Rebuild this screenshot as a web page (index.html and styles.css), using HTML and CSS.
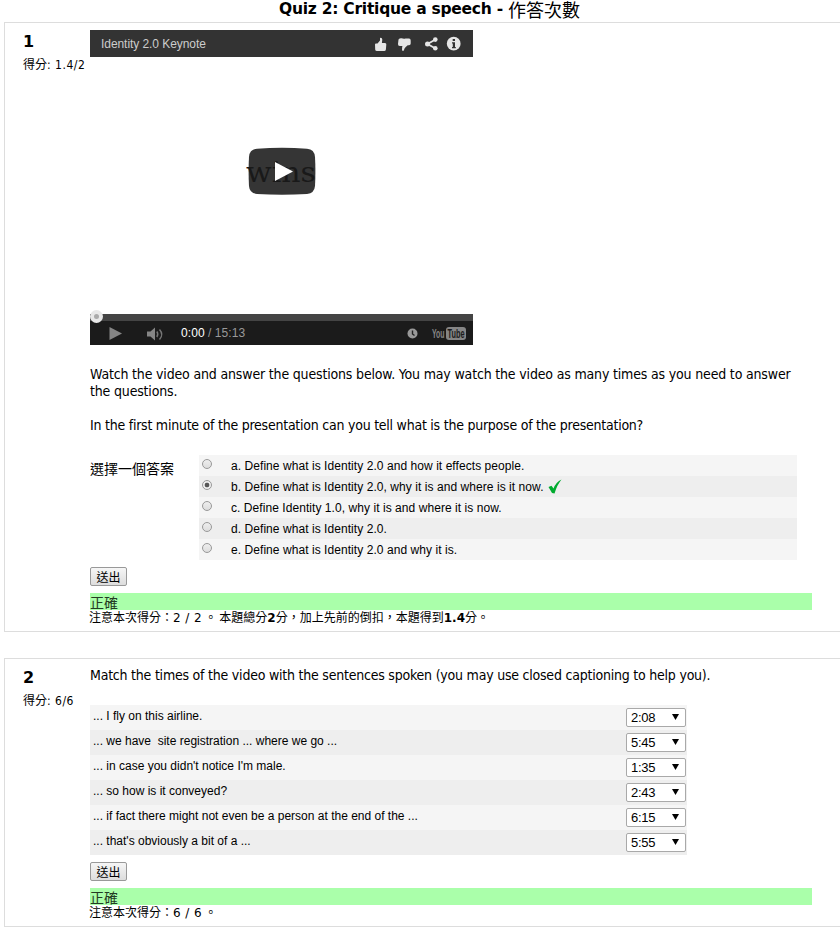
FILE: index.html
```html
<!DOCTYPE html>
<html lang="zh-Hant">
<head>
<meta charset="utf-8">
<title>Quiz 2: Critique a speech</title>
<link rel="stylesheet" href="styles.css">
</head>
<body>
<h1 class="title">Quiz 2: Critique a speech - <span class="cjk">作答次數</span></h1>

<section class="question first">
  <div class="info"><h2>1</h2><p class="grade"><span class="cjk">得分</span>: 1.4/2</p></div>
  <div class="content">
    <div class="player">
      <div class="player-top">
        <span class="player-title">Identity 2.0 Keynote</span>
        <svg class="actions" width="90" height="27" viewBox="0 0 90 27" fill="#e6e6e6">
          <path d="M2 14.500q0-1 1-1h1.500l2.500-3V8q2-.7 2.300 1.500l-.4 3.500H12q1.500.2 1.300 1.500l-.4 5q-.2 1.500-1.700 1.500H4q-1.700 0-1.800-1.500z"/>
          <path d="M25.500 9.500q1-1.500 3-1.300 2 .8 4 .3h3.500q1.700 0 1.700 2v3q0 1.500-1.700 1.700h-1.300q-2.800 2-3.300 3.500-.2 2.300-1.700 2.300-1-.8-.6-3.300l.3-1.700h-2.600q-2-.2-1.800-2z"/>
          <path d="M62.500 9.500 54.500 14l8 4.500" fill="none" stroke="#e6e6e6" stroke-width="1.800"/><circle cx="62.300" cy="9.600" r="2.300"/><circle cx="54.500" cy="14" r="2.500"/><circle cx="62.300" cy="18.300" r="2.300"/>
          <circle cx="80.700" cy="13.700" r="6.900"/>
          <path d="M79.700 9h2.300v2h-2.300zM79 12.200H82v4.800h.8v1.200H79V17h.8v-3.600H79z" fill="#333"/>
        </svg>
      </div>
      <div class="screen">
        <svg width="80" height="56" viewBox="0 0 80 56">
          <path d="M14 3.700Q39 2 64 3.700 71.500 4.300 72 12 72.800 26 72 41 71.500 48 64 49 39 50.500 14 49 6.500 48.200 6 41 5.200 26 6 12 6.500 4.300 14 3.700z" fill="#353535"/>
          <text class="caption" x="3" y="37" textLength="70" lengthAdjust="spacingAndGlyphs">wins</text>
          <path d="M32 17v19l18-9.500z" fill="#fff"/>
        </svg>
      </div>
      <div class="progress"><span class="knob"></span></div>
      <div class="controls">
        <svg class="buttons" width="80" height="24" viewBox="0 0 80 24" fill="#858585">
          <path d="M19.500 6v13L32 12.500z"/>
          <path d="M57 10.500h3.500l4.500-4v13l-4.500-4H57z"/>
          <path d="M66.800 10.500q2 2.700 0 5.500M69.500 8.500q4.500 5 0 10" fill="none" stroke="#777" stroke-width="1.400"/>
        </svg>
        <span class="time"><b>0:00</b> / 15:13</span>
        <svg class="brand" width="66" height="24" viewBox="0 0 66 24">
          <circle cx="12.500" cy="12.500" r="5" fill="#999"/>
          <path d="M12.500 9.500v3.500l2 1.500" fill="none" stroke="#222" stroke-width="1.400"/>
          <rect x="46" y="6" width="20" height="13" rx="3" fill="#858585"/>
          <text class="logo" x="32" y="17" textLength="12.500" lengthAdjust="spacingAndGlyphs" fill="#858585">You</text>
          <text class="logo" x="47.500" y="17" textLength="17" lengthAdjust="spacingAndGlyphs" fill="#1b1b1b">Tube</text>
        </svg>
      </div>
    </div>
    <p class="prose intro">Watch the video and answer the questions below. You may watch the video as many times as you need to answer<br>the questions.</p>
    <p class="prose ask">In the first minute of the presentation can you tell what is the purpose of the presentation?</p>
    <div class="choices">
      <div class="choose cjk">選擇一個答案</div>
      <div class="answers">
        <label class="answer"><i class="radio"></i><span>a. Define what is Identity 2.0 and how it effects people.</span></label>
        <label class="answer"><i class="radio on"></i><span>b. Define what is Identity 2.0, why it is and where is it now.</span><svg class="tick" width="14" height="15" viewBox="0 0 14 15"><path d="M.5 8 3.500 6.800 5.500 9.500Q8 3 13.500.5 9 6 6.500 14.500L4 14z" fill="#00ab2f"/></svg></label>
        <label class="answer"><i class="radio"></i><span>c. Define Identity 1.0, why it is and where it is now.</span></label>
        <label class="answer"><i class="radio"></i><span>d. Define what is Identity 2.0.</span></label>
        <label class="answer"><i class="radio"></i><span>e. Define what is Identity 2.0 and why it is.</span></label>
      </div>
    </div>
    <button class="submit">送出</button>
    <div class="correct">正確</div>
    <p class="note">注意本次得分：<span class="num">2 / 2</span> 。 本題總分<b>2</b>分，加上先前的倒扣，本題得到<b>1.4</b>分。</p>
  </div>
</section>

<section class="question second">
  <div class="info"><h2>2</h2><p class="grade"><span class="cjk">得分</span>: 6/6</p></div>
  <div class="content">
    <p class="prose match">Match the times of the video with the sentences spoken (you may use closed captioning to help you).</p>
    <div class="pairs">
      <div class="pair"><span>... I fly on this airline.</span><div class="select">2:08<i></i></div></div>
      <div class="pair"><span>... we have&nbsp; site registration ... where we go ...</span><div class="select">5:45<i></i></div></div>
      <div class="pair"><span>... in case you didn't notice I'm male.</span><div class="select">1:35<i></i></div></div>
      <div class="pair"><span>... so how is it conveyed?</span><div class="select">2:43<i></i></div></div>
      <div class="pair"><span>... if fact there might not even be a person at the end of the ...</span><div class="select">6:15<i></i></div></div>
      <div class="pair"><span>... that's obviously a bit of a ...</span><div class="select">5:55<i></i></div></div>
    </div>
    <button class="submit">送出</button>
    <div class="correct">正確</div>
    <p class="note">注意本次得分：<span class="num">6 / 6</span> 。</p>
  </div>
</section>
</body>
</html>
```
FILE: styles.css
```css
* { box-sizing: border-box; }
body { margin: 0; width: 840px; height: 928px; overflow: hidden; background: #fff; color: #000; font-family: "DejaVu Sans Condensed", "DejaVu Sans", "Noto Sans CJK TC", sans-serif; }
h1, h2, p { margin: 0; }
.cjk { font-family: "Noto Sans CJK TC", sans-serif; font-weight: 400; }
.title { display: flex; align-items: flex-start; height: 22px; padding-left: 279px; font: bold 15.5px/19px "DejaVu Sans", sans-serif; white-space: pre; letter-spacing: -.25px; }
.title .cjk { font-size: 18px; letter-spacing: 0; line-height: 18px; }
.question { display: flex; margin-left: 4px; border: 1px solid #ddd; border-right: 0; }
.first { height: 610px; padding-top: 7px; }
.second { height: 269px; margin-top: 26px; padding-top: 7px; }
.info { width: 85px; padding-left: 18px; flex: none; white-space: nowrap; }
.info h2 { font: bold 16px/24px "DejaVu Sans", sans-serif; }
.grade { font-size: 12px; line-height: 20px; letter-spacing: .5px; }
.grade .cjk { letter-spacing: 0; }
.content { width: 722px; flex: none; }
.player { width: 383px; font-family: "Liberation Sans", sans-serif; font-size: 12px; }
.player-top { height: 27px; background: #333; display: flex; justify-content: space-between; padding-left: 11px; line-height: 28px; color: #ccc; letter-spacing: -.06px; }
.actions { margin-right: 10px; }
.screen { height: 257px; padding: 88px 0 0 153px; }
.screen svg { display: block; }
.caption { font: 28px "DejaVu Serif", serif; fill: #191919; }
.progress { height: 7px; background: #444; position: relative; }
.knob { position: absolute; left: 0; top: -4px; width: 13px; height: 13px; border-radius: 50%; border: 4px solid #e8e8e8; background: #aaa; }
.controls { height: 24px; background: #1b1b1b; display: flex; color: #999; line-height: 24px; }
.time { margin-left: 11px; letter-spacing: .07px; }
.time b { color: #fff; font-weight: 400; }
.brand { margin-left: auto; margin-right: 7px; }
.logo { font: bold 12px "Liberation Sans", sans-serif; }
.prose { font-size: 14px; line-height: 17px; white-space: nowrap; letter-spacing: -.17px; }
.intro { padding-top: 21px; }
.ask { padding-top: 17px; letter-spacing: -.24px; }
.match { padding-top: 1px; letter-spacing: -.22px; }
.choices { display: flex; margin-top: 21px; }
.choose { width: 109px; font-size: 14px; line-height: 26px; }
.answers { width: 598px; }
.answer { height: 21px; display: flex; padding-left: 3px; background: #f5f5f5; font: 12px/22px "Liberation Sans", sans-serif; white-space: nowrap; letter-spacing: .06px; }
.answer:nth-child(even), .pair:nth-child(even) { background: #eee; }
.radio { width: 10px; height: 10px; flex: none; border: 1px solid #999; border-radius: 50%; margin: 4px 19px 0 0; background: linear-gradient(#eee, #ddd); }
.radio.on { background: radial-gradient(circle, #555 0 2px, #eee 2.7px); }
.tick { margin: 3px 0 0 4px; }
.submit { display: block; width: 37px; height: 19px; margin-top: 7px; padding: 0; border: 1px solid #999; border-radius: 2px; background: linear-gradient(#f6f6f6, #ddd); color: #000; font: 12px/16px "Noto Sans CJK TC", sans-serif; }
.correct { height: 17px; margin-top: 7px; background: #afa; color: #243b24; font: 14px/18px "Noto Sans CJK TC", sans-serif; }
.note { font: 12px/14px "Noto Sans CJK TC", sans-serif; white-space: nowrap; margin-left: -1px; }
.note b, .num { font-family: "DejaVu Sans", sans-serif; }
.num { letter-spacing: .4px; }
.pairs { width: 597px; margin-top: 21px; }
.pair { height: 25px; display: flex; justify-content: space-between; padding: 0 1px 0 3px; background: #f5f5f5; font: 12px/22px "Liberation Sans", sans-serif; letter-spacing: 0; }
.select { width: 60px; height: 19px; margin-top: 3px; padding: 0 6px 0 4px; display: flex; justify-content: space-between; border: 1px solid #a9a9a9; border-radius: 2px; background: #fff; font-size: 13px; line-height: 18px; letter-spacing: -.3px; }
.select i { margin-top: 5px; width: 7px; height: 6px; background: #000; clip-path: polygon(0 0, 100% 0, 50% 100%); }
```
